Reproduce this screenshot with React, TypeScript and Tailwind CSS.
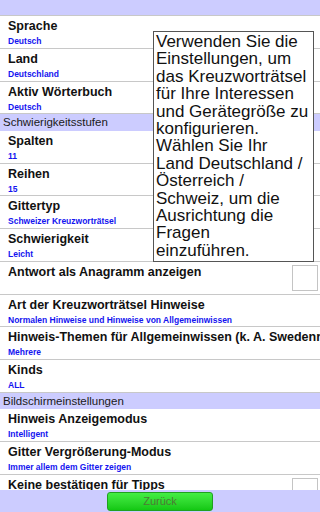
import React from 'react';

type Item =
  | { kind: 'header'; label: string }
  | { kind: 'row'; title: string; value?: string; check?: boolean };

const items: Item[] = [
  { kind: 'row', title: 'Sprache', value: 'Deutsch' },
  { kind: 'row', title: 'Land', value: 'Deutschland' },
  { kind: 'row', title: 'Aktiv Wörterbuch', value: 'Deutsch' },
  { kind: 'header', label: 'Schwierigkeitsstufen' },
  { kind: 'row', title: 'Spalten', value: '11' },
  { kind: 'row', title: 'Reihen', value: '15' },
  { kind: 'row', title: 'Gittertyp', value: 'Schweizer Kreuzworträtsel' },
  { kind: 'row', title: 'Schwierigkeit', value: 'Leicht' },
  { kind: 'row', title: 'Antwort als Anagramm anzeigen', check: true },
  { kind: 'row', title: 'Art der Kreuzworträtsel Hinweise', value: 'Normalen Hinweise und Hinweise von Allgemeinwissen' },
  { kind: 'row', title: 'Hinweis-Themen für Allgemeinwissen (k. A. Swedenrätsel)', value: 'Mehrere' },
  { kind: 'row', title: 'Kinds', value: 'ALL' },
  { kind: 'header', label: 'Bildschirmeinstellungen' },
  { kind: 'row', title: 'Hinweis Anzeigemodus', value: 'Intelligent' },
  { kind: 'row', title: 'Gitter Vergrößerung-Modus', value: 'Immer allem dem Gitter zeigen' },
  { kind: 'row', title: 'Keine bestätigen für Tipps', check: true },
];

const tipLines = [
  'Verwenden Sie die',
  'Einstellungen, um',
  'das Kreuzworträtsel',
  'für Ihre Interessen',
  'und Gerätegröße zu',
  'konfigurieren.',
  'Wählen Sie Ihr',
  'Land Deutschland /',
  'Österreich /',
  'Schweiz, um die',
  'Ausrichtung die',
  'Fragen',
  'einzuführen.',
];

function Row({ title, value, check }: { title: string; value?: string; check?: boolean }) {
  return (
    <div className="flex h-[32.75px] shrink-0 border-b border-[#c8c8c8] bg-white">
      <div className="min-w-0 flex-1 overflow-hidden pl-[8px] pt-[2px]">
        <div className="whitespace-nowrap text-[12.5px] font-bold leading-[16px] text-[#111]">{title}</div>
        {value && (
          <div className="mt-[2px] whitespace-nowrap text-[8.5px] font-bold leading-[10px] text-[#1414f0]">{value}</div>
        )}
      </div>
      {check && <div className="mr-[2px] mt-[3px] h-[26px] w-[26px] shrink-0 border border-[#c4c4c4] bg-white" />}
    </div>
  );
}

export default function App() {
  return (
    <div className="relative h-[512px] w-[320px] overflow-hidden bg-white font-['Liberation_Sans',Arial,sans-serif]">
      <div className="flex flex-col">
        <div className="h-[16px] shrink-0 border-b border-[#c8c8c8] bg-[#ccccff]" />
        {items.map((it, i) =>
          it.kind === 'header' ? (
            <div key={i} className="h-[16.5px] shrink-0 bg-[#ccccff] pl-[3px] text-[11.5px] leading-[16.5px] text-[#1a1a1a]">
              {it.label}
            </div>
          ) : (
            <Row key={i} title={it.title} value={it.value} check={it.check} />
          )
        )}
      </div>

      {/* help tooltip */}
      <div className="absolute left-[153px] top-[31px] h-[231px] w-[161px] border border-[#555] bg-white pl-[2px] pt-[1px] text-[17px] leading-[17.4px] text-[#111]">
        {tipLines.map((l, i) => (
          <div key={i} className="whitespace-nowrap">{l}</div>
        ))}
      </div>

      {/* bottom bar */}
      <div className="absolute bottom-0 left-0 flex h-[22px] w-[320px] items-start justify-center bg-[#ccccff] pt-[1.5px]">
        <button className="h-[19px] w-[106px] rounded-[3px] border border-[#20a020] bg-gradient-to-b from-[#44ee44] to-[#12c812] text-[11px] leading-[17px] text-[#4d7a35]">
          Zurück
        </button>
      </div>
    </div>
  );
}
